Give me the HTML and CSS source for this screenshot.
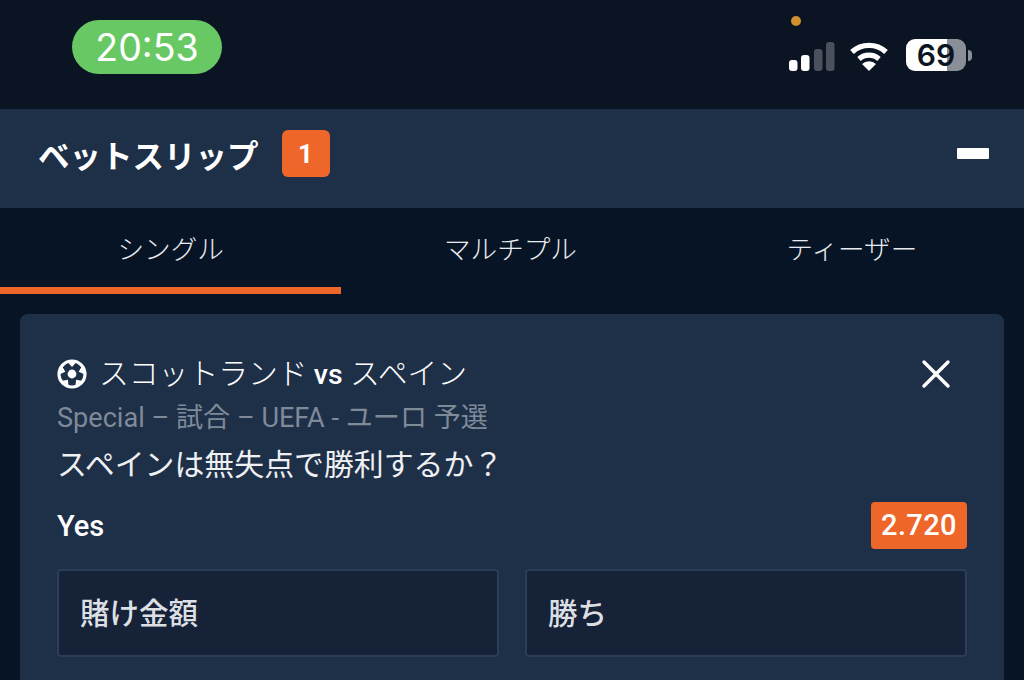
FILE: index.html
```html
<!DOCTYPE html>
<html lang="ja">
<head>
<meta charset="UTF-8">
<meta name="viewport" content="width=device-width,initial-scale=1">
<title>ベットスリップ</title>
<link rel="stylesheet" href="styles.css">
</head>

<body>
<!-- Status bar -->
<div class="status-bar">
  <div class="time-pill">20:53</div>
  <div class="status-icons">
    <span class="rec-dot"></span>
    <svg class="signal" width="46" height="32" viewBox="0 0 46 32">
      <rect x="0" y="19" width="8.5" height="11" rx="3" fill="#fff"/>
      <rect x="12" y="14" width="8.5" height="16" rx="3" fill="#fff"/>
      <rect x="25" y="8" width="8.5" height="22" rx="3" fill="#4a515c"/>
      <rect x="37" y="1" width="8.5" height="29" rx="3" fill="#4a515c"/>
    </svg>
    <svg class="wifi" width="40" height="30" viewBox="0 0 40 30">
      <path d="M3 11 A25 25 0 0 1 37 11" fill="none" stroke="#fff" stroke-width="5.4"/>
      <path d="M10 18 A15 15 0 0 1 30 18" fill="none" stroke="#fff" stroke-width="5.2"/>
      <path d="M20 30 L13 23 A10 10 0 0 1 27 23 Z" fill="#fff"/>
    </svg>
    <div class="battery">
      <div class="battery-body"><span>69</span></div>
      <span class="battery-tip"></span>
    </div>
  </div>
</div>

<!-- Header -->
<header class="slip-header">
  <h1>ベットスリップ</h1>
  <span class="count">1</span>
  <span class="collapse"></span>
</header>

<!-- Tabs -->
<nav class="tabs">
  <a class="tab active">シングル</a>
  <a class="tab">マルチプル</a>
  <a class="tab">ティーザー</a>
</nav>

<main>
  <section class="bet-card">
    <div class="match-row">
      <svg class="ball" width="30" height="30" viewBox="0 0 30 30">
        <circle cx="15" cy="15" r="14.6" fill="#fff"/>
        <circle cx="15" cy="15" r="11.4" fill="#1e2f48"/>
        <path id="notch" d="M10.5 3 H19.5 L15 8 Z" fill="#fff"/>
        <path d="M10.5 3 H19.5 L15 8 Z" fill="#fff" transform="rotate(72 15 15)"/>
        <path d="M10.5 3 H19.5 L15 8 Z" fill="#fff" transform="rotate(144 15 15)"/>
        <path d="M10.5 3 H19.5 L15 8 Z" fill="#fff" transform="rotate(216 15 15)"/>
        <path d="M10.5 3 H19.5 L15 8 Z" fill="#fff" transform="rotate(288 15 15)"/>
        <circle cx="15" cy="15" r="4.4" fill="#fff"/>
      </svg>
      <span class="match">スコットランド <b>vs</b> スペイン</span>
      <svg class="close" width="30" height="30" viewBox="0 0 30 30">
        <path d="M3 3 L27 27 M27 3 L3 27" stroke="#fff" stroke-width="3.4" stroke-linecap="round"/>
      </svg>
    </div>
    <p class="market">Special – 試合 – UEFA - ユーロ 予選</p>
    <p class="question">スペインは無失点で勝利するか？</p>
    <div class="pick-row">
      <span class="pick">Yes</span>
      <span class="odds">2.720</span>
    </div>
    <div class="inputs">
      <div class="field">賭け金額</div>
      <div class="field">勝ち</div>
    </div>
  </section>
</main>
</body>
</html>
```

FILE: styles.css
```css
/* ------------- PAGE ------------- */
*{box-sizing:border-box}
html,body{height:100%}
body{
  margin:0;height:680px;overflow:hidden;
  background:#071426;color:#fff;
  font-family:Roboto,"Noto Sans CJK JP",sans-serif;
}

/* Status bar */
.status-bar{
  display:flex;justify-content:space-between;
  height:109px;padding:20px 52px 0 72px;background:#0b1422;
}
.time-pill{
  display:flex;justify-content:center;align-items:center;
  width:150px;height:54px;border-radius:27px;
  background:#68c964;font-family:Inter,sans-serif;font-size:37.5px;
}
.status-icons{position:relative;display:flex;align-items:flex-start;gap:16px;padding-top:20px}
.rec-dot{
  position:absolute;top:-4px;left:2px;width:10px;height:10px;
  border-radius:50%;background:#d18f2d;
}
.signal{margin-top:1px}
.wifi{margin:1px 1px 0 -2px}
.battery{display:flex;align-items:center;margin-top:-1px}
.battery-body{
  display:flex;justify-content:center;align-items:center;
  width:60px;height:32px;border-radius:9px;
  background:linear-gradient(90deg,#fff 0 68%,#8a8e96 68%);
  color:#0b1422;font-family:Inter,sans-serif;font-size:30px;font-weight:600;
}
.battery-tip{width:4px;height:11px;margin-left:2px;border-radius:0 4px 4px 0;background:#8a8e96}

/* Header */
.slip-header{
  display:flex;align-items:center;
  height:99px;padding:0 35px 10px 38px;background:#1e2f48;
}
.slip-header h1{margin:8px 0 0;font-size:31.5px;font-weight:700;line-height:1}
.count{
  display:flex;justify-content:center;align-items:center;
  width:48px;height:47px;margin-left:23px;border-radius:6px;
  background:#ee6629;font-size:26px;font-weight:700;
}
.collapse{width:32px;height:11px;margin-left:auto;border-radius:1px;background:#fff}

/* Tabs */
.tabs{display:grid;grid-template-columns:repeat(3,1fr);height:86px}
.tab{
  display:flex;justify-content:center;align-items:center;
  padding:0 3px 7px 0;font-size:26.6px;font-weight:300;color:#e8eaee;
}
.tab.active{border-bottom:7px solid #ee6629;padding:0}

/* Bet card */
main{padding:20px 20px 0}
.bet-card{
  height:400px;padding:43px 37px 0;border-radius:8px;background:#1e2f48;
}
.match-row{display:flex;align-items:center;height:34px}
.ball{margin-right:12px}
.match{font-size:29.8px;font-weight:300;line-height:34px}
.match b{font-size:28.5px;font-weight:500;margin-left:-1px}
.close{margin-left:auto;margin-right:16px}
.market{margin:10px 0 0;font-size:27.1px;font-weight:400;line-height:34px;color:#7f8a99}
.question{margin:12px 0 0;font-size:29.9px;font-weight:400;line-height:36px;color:#eef0f2}
.pick-row{display:flex;justify-content:space-between;align-items:center;margin-top:19px}
.pick{font-size:29px;font-weight:500}
.odds{
  padding:0 10px;height:47px;line-height:47px;border-radius:4px;
  background:#ee6629;font-size:29px;font-weight:500;letter-spacing:.4px;
}
.inputs{display:grid;grid-template-columns:1fr 1fr;gap:26px;margin-top:20px}
.field{
  display:flex;align-items:center;height:88px;padding:0 21px 4px;
  border:2px solid #2c3d58;border-radius:4px;background:#152237;
  font-size:29.5px;font-weight:500;color:#dcdfe3;
}
```
